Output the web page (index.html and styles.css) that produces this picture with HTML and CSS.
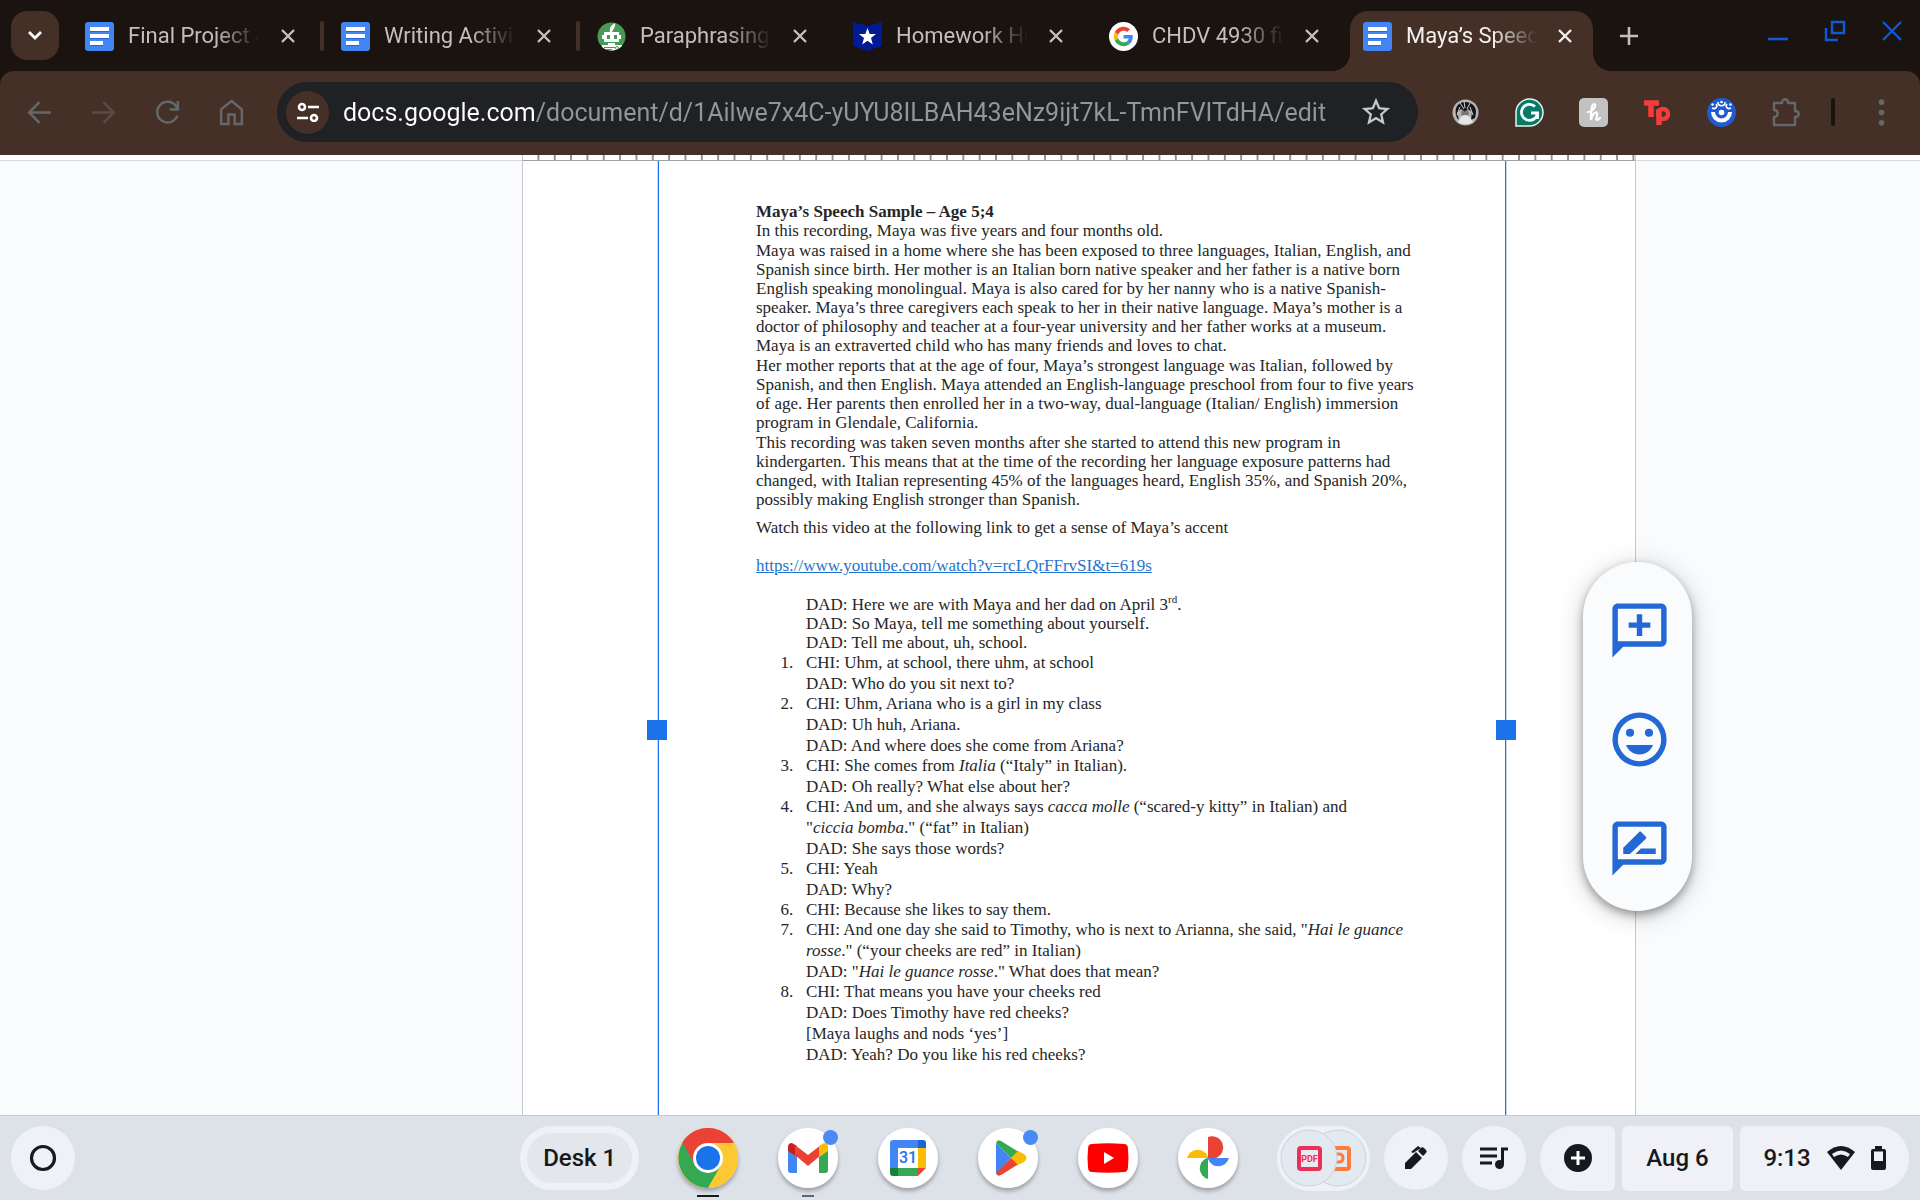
FILE: index.html
```html
<!DOCTYPE html>
<html lang="en">
<head>
<meta charset="utf-8">
<meta name="viewport" content="width=device-width, initial-scale=1">
<title>Maya’s Speech Sample</title>
<link rel="stylesheet" href="styles.css">
</head>
<body>
<svg class="defs" aria-hidden="true">
  <symbol id="docs" viewBox="0 0 29 29"><rect width="29" height="29" rx="3" fill="#4285f4"/><path fill="#2a65c8" d="M5 8h19v2H5zM5 15h19v2H5zM5 22h13v2H5z"/><path fill="#fff" d="M5 5h19v4H5zM5 12h19v4H5zM5 19h13v4H5z"/></symbol>
  <symbol id="close" viewBox="0 0 16 16"><path d="M2 2l12 12M14 2L2 14" stroke="currentColor" stroke-width="2.4" fill="none"/></symbol>
</svg>

<header class="browser">
  <nav class="tabstrip" aria-label="Tabs">
    <button class="tab-search" aria-label="Search tabs"><svg width="16" height="12" viewBox="0 0 16 12"><path d="M2 2l6 6 6-6" fill="none" stroke="#fff" stroke-width="2.8"/></svg></button>
    <div class="tab divided"><svg class="favicon"><use href="#docs"/></svg><span class="tab-title">Final Project 4930</span><button class="tab-close" aria-label="Close tab"><svg><use href="#close"/></svg></button></div>
    <div class="tab divided"><svg class="favicon"><use href="#docs"/></svg><span class="tab-title">Writing Activities</span><button class="tab-close" aria-label="Close tab"><svg><use href="#close"/></svg></button></div>
    <div class="tab"><svg class="favicon" viewBox="0 0 29 29"><defs><clipPath id="bot"><circle cx="14.500" cy="14.500" r="14"/></clipPath></defs><g clip-path="url(#bot)"><path fill="#479a56" d="M0 0h29v29H0z"/><path fill="#fff" d="M7 10h15v10H7zM13 10c-1-5 2-7 5-9 1 4-2 6-3 9zM11 21h7v2h-7zM5 23h20v6H5zM5 13h2v4H5zM22 13h2v4h-2z"/><path fill="#479a56" d="M10 13h3v4h-3zM17 13h3v4h-3zM7 25h11v1H7zM9 27h6v1H9z"/><circle cx="20" cy="26" r="1.500" fill="none" stroke="#479a56"/></g></svg><span class="tab-title">Paraphrasing Tool</span><button class="tab-close" aria-label="Close tab"><svg><use href="#close"/></svg></button></div>
    <div class="tab"><svg class="favicon" viewBox="0 0 29 29"><path fill="#001a96" d="M0 0l14.500 4L29 0v24l-14.500 5L0 24z"/><path fill="#fff" d="M14.500 6l2.200 6h6.300l-5 4 1.800 6.500-5.300-3.800-5.300 3.800L11 16l-5-4h6.300z"/></svg><span class="tab-title">Homework Help</span><button class="tab-close" aria-label="Close tab"><svg><use href="#close"/></svg></button></div>
    <div class="tab"><svg class="favicon" viewBox="-12 -12 72 72"><circle cx="24" cy="24" r="36" fill="#fff"/><path fill="#EA4335" d="M24 9.500c3.540 0 6.710 1.220 9.210 3.600l6.850-6.850C35.900 2.380 30.470 0 24 0 14.620 0 6.510 5.380 2.560 13.220l7.980 6.190C12.430 13.720 17.740 9.500 24 9.500z"/><path fill="#4285F4" d="M46.980 24.550c0-1.570-.15-3.090-.38-4.550H24v9.020h12.940c-.58 2.960-2.260 5.480-4.780 7.180l7.730 6c4.510-4.180 7.090-10.360 7.090-17.650z"/><path fill="#FBBC05" d="M10.530 28.590A14.500 14.500 0 0 1 9.770 24c0-1.600.27-3.140.76-4.590l-7.980-6.190A24 24 0 0 0 0 24c0 3.880.92 7.540 2.560 10.780z"/><path fill="#34A853" d="M24 48c6.480 0 11.930-2.130 15.890-5.810l-7.730-6c-2.150 1.450-4.920 2.300-8.160 2.300-6.260 0-11.570-4.220-13.470-9.910l-7.980 6.190C6.510 42.620 14.620 48 24 48z"/></svg><span class="tab-title">CHDV 4930 final</span><button class="tab-close" aria-label="Close tab"><svg><use href="#close"/></svg></button></div>
    <div class="tab active"><svg class="favicon"><use href="#docs"/></svg><span class="tab-title">Maya’s Speech Sample</span><button class="tab-close" aria-label="Close tab"><svg><use href="#close"/></svg></button></div>
    <button class="new-tab" aria-label="New tab"><svg width="20" height="20" viewBox="0 0 20 20"><path d="M10 1v18M1 10h18" stroke="currentColor" stroke-width="2.600"/></svg></button>
    <div class="window-controls">
      <button aria-label="Minimize"><svg viewBox="0 0 22 22"><path d="M1 19h20" stroke="currentColor" stroke-width="2.600"/></svg></button>
      <button aria-label="Restore"><svg viewBox="0 0 22 22"><path d="M8 2h12v11H8zM2 8v12h12" fill="none" stroke="currentColor" stroke-width="2.400"/></svg></button>
      <button aria-label="Close window"><svg viewBox="0 0 22 22"><path d="M2 2l18 18M20 2L2 20" stroke="currentColor" stroke-width="2.400"/></svg></button>
    </div>
  </nav>

  <div class="toolbar">
    <button class="tool" aria-label="Back"><svg viewBox="0 0 28 28"><path d="M25 14H4M14 4L4 14l10 10" class="line"/></svg></button>
    <button class="tool dim" aria-label="Forward"><svg viewBox="0 0 28 28"><path d="M3 14h21M14 4l10 10-10 10" class="line"/></svg></button>
    <button class="tool" aria-label="Reload"><svg viewBox="0 0 28 28"><path d="M23.500 17A10 10 0 1 1 22 7.500l1.500 2.500M24 3v8h-8" class="line"/></svg></button>
    <button class="tool" aria-label="Home"><svg viewBox="0 0 28 28"><path d="M4 25V11l10-8 10 8v14h-7v-9h-6v9z" class="line"/></svg></button>
    <div class="omnibox">
      <button class="site-info" aria-label="View site information"><svg width="24" height="20" viewBox="0 0 24 20"><g fill="none" stroke="#fff" stroke-width="2.600"><circle cx="6" cy="5" r="3"/><path d="M12 5h11M1 16h11"/><circle cx="18" cy="16" r="3"/></g></svg></button>
      <input class="address" type="text" aria-label="Address" value="docs.google.com/document/d/1Ailwe7x4C-yUYU8ILBAH43eNz9ijt7kL-TmnFVITdHA/edit">
      <button class="star" aria-label="Bookmark this tab"><svg width="34" height="34" viewBox="0 0 24 24"><path fill="#c7c8ca" d="M22 9.240l-7.190-.62L12 2 9.190 8.630 2 9.240l5.460 4.730L5.820 21 12 17.270 18.180 21l-1.630-7.030L22 9.240zM12 15.400l-3.760 2.270 1-4.280-3.320-2.880 4.380-.38L12 6.100l1.710 4.040 4.380.38-3.320 2.880 1 4.280L12 15.400z"/></svg></button>
    </div>
    <div class="extensions">
      <button class="tool" aria-label="Portrait extension"><svg viewBox="0 0 29 29"><circle cx="14.500" cy="14.500" r="13" fill="#b5b5b5"/><path d="M6 20C2 9 8 4 14 4s14 4 10 16l-4 2 1-8-4-3-3 3-4-3-4 4 2 7z" fill="#161616"/><path d="M11 11l3 3 3-3 1 6h-8z" fill="#777"/><path d="M10 19l4-2 5 2 3 5c-4 3-11 3-15 0z" fill="#e6e6e6"/><path d="M9 5l4 6M13 3l1 7M19 5l-3 6M6 17l3-8M22 17l-3-8" stroke="#d2d2d2"/></svg></button>
      <button class="tool" aria-label="Grammar extension"><svg viewBox="0 0 29 29"><path d="M1 28V14.500A13.500 13.500 0 1 1 14.500 28z" fill="#067a68" stroke="#e9f3f1" stroke-width="1.500"/><path d="M20 8.500A8 8 0 1 0 22.500 15H16M22.500 15v6" fill="none" stroke="#fff" stroke-width="2.800"/></svg></button>
      <button class="tool" aria-label="Coupon extension"><svg viewBox="0 0 29 29"><rect width="29" height="29" rx="5" fill="#c2c2c2"/><path d="M9 14c6-1 9-8 6-8s-3 10-3 16c1-6 5-9 6-7s-2 7 0 7c1 0 2-1 3-2" fill="none" stroke="#fff" stroke-width="2.200" stroke-linecap="round"/></svg></button>
      <button class="tool" aria-label="Teleparty"><svg viewBox="0 0 29 29"><path d="M1 5h15M8 4v15M16 11v16" fill="none" stroke="#f43d3a" stroke-width="5.500"/><circle cx="20" cy="16" r="5" fill="none" stroke="#f43d3a" stroke-width="4.500"/></svg></button>
      <button class="tool" aria-label="Blue extension"><svg viewBox="0 0 29 29"><circle cx="14.500" cy="14.500" r="14.500" fill="#1e5bd3"/><path d="M4 14h4a6.500 6.500 0 0 0 13 0h4a10.500 10.500 0 0 1-21 0z" fill="#fff"/><circle cx="14.500" cy="14.500" r="2.800" fill="#fff"/><g fill="none" stroke="#fff" stroke-width="1.600"><path d="M11 4c0 5 7 5 7 0M5 10c4 2 6-2 4-4M24 10c-4 2-6-2-4-4"/></g><g fill="#fff"><circle cx="14.500" cy="4" r="1.300"/><circle cx="5.500" cy="6.500" r="1.200"/><circle cx="23.500" cy="6.500" r="1.200"/></g></svg></button>
      <button class="tool" aria-label="Extensions"><svg viewBox="0 0 29 29"><path d="M3 5h8c0-5 6-5 6 0h7v8c5 0 5 6 0 6v8H3v-8c5 0 5-7 0-7z" class="line" stroke-linejoin="round"/></svg></button>
    </div>
    <span class="toolbar-divider"></span>
    <button class="tool" aria-label="Menu"><svg viewBox="0 0 28 28"><g fill="currentColor"><circle cx="14" cy="4" r="2.700"/><circle cx="14" cy="14" r="2.700"/><circle cx="14" cy="24" r="2.700"/></g></svg></button>
  </div>
</header>

<main class="workspace">
  <div class="gutter"></div>
  <section class="page">
    <div class="ruler"></div>
    <article class="selected-image">
      <div class="copy">
        <h1>Maya’s Speech Sample – Age 5;4</h1>
        <p>In this recording, Maya was five years and four months old.</p>
        <p>Maya was raised in a home where she has been exposed to three languages, Italian, English, and<br>Spanish since birth. Her mother is an Italian born native speaker and her father is a native born<br>English speaking monolingual. Maya is also cared for by her nanny who is a native Spanish-<br>speaker. Maya’s three caregivers each speak to her in their native language. Maya’s mother is a<br>doctor of philosophy and teacher at a four-year university and her father works at a museum.<br>Maya is an extraverted child who has many friends and loves to chat.</p>
        <p>Her mother reports that at the age of four, Maya’s strongest language was Italian, followed by<br>Spanish, and then English. Maya attended an English-language preschool from four to five years<br>of age. Her parents then enrolled her in a two-way, dual-language (Italian/ English) immersion<br>program in Glendale, California.</p>
        <p>This recording was taken seven months after she started to attend this new program in<br>kindergarten. This means that at the time of the recording her language exposure patterns had<br>changed, with Italian representing 45% of the languages heard, English 35%, and Spanish 20%,<br>possibly making English stronger than Spanish.</p>
        <p class="watch">Watch this video at the following link to get a sense of Maya’s accent</p>
        <p class="link"><a href="#video">https://www.youtube.com/watch?v=rcLQrFFrvSI&amp;t=619s</a></p>
        <div class="opening">
          <p>DAD: Here we are with Maya and her dad on April 3<sup>rd</sup>.</p>
          <p>DAD: So Maya, tell me something about yourself.</p>
          <p>DAD: Tell me about, uh, school.</p>
        </div>
        <ol>
          <li>CHI: Uhm, at school, there uhm, at school<br>DAD: Who do you sit next to?</li>
          <li>CHI: Uhm, Ariana who is a girl in my class<br>DAD: Uh huh, Ariana.<br>DAD: And where does she come from Ariana?</li>
          <li>CHI: She comes from <i>Italia</i> (“Italy” in Italian).<br>DAD: Oh really? What else about her?</li>
          <li>CHI: And um, and she always says <i>cacca molle</i> (“scared-y kitty” in Italian) and<br>"<i>ciccia bomba</i>." (“fat” in Italian)<br>DAD: She says those words?</li>
          <li>CHI: Yeah<br>DAD: Why?</li>
          <li>CHI: Because she likes to say them.</li>
          <li>CHI: And one day she said to Timothy, who is next to Arianna, she said, "<i>Hai le guance<br>rosse</i>." (“your cheeks are red” in Italian)<br>DAD: "<i>Hai le guance rosse</i>." What does that mean?</li>
          <li>CHI: That means you have your cheeks red<br>DAD: Does Timothy have red cheeks?<br>[Maya laughs and nods ‘yes’]<br>DAD: Yeah? Do you like his red cheeks?</li>
        </ol>
      </div>
      <span class="handle left"></span>
      <span class="handle right"></span>
    </article>
  </section>
  <div class="gutter"></div>
  <aside class="actions" aria-label="Comment tools">
    <button aria-label="Add comment"><svg viewBox="0 0 24 24"><path d="M20 2H4c-1.100 0-2 .9-2 2v18l4-4h14c1.100 0 2-.9 2-2V4c0-1.100-.9-2-2-2zm0 14H4V4h16v12zM11 14h2v-3h3V9h-3V6h-2v3H8v2h3z"/></svg></button>
    <button aria-label="Add emoji reaction"><svg viewBox="0 0 24 24"><path fill-rule="evenodd" d="M12 2a10 10 0 1 0 0 20 10 10 0 0 0 0-20zm0 18a8 8 0 1 1 0-16 8 8 0 0 1 0 16z"/><circle cx="8.500" cy="9.500" r="1.500"/><circle cx="15.500" cy="9.500" r="1.500"/><path d="M7 14h10c-.8 2-2.700 3.500-5 3.500S7.800 16 7 14z"/></svg></button>
    <button aria-label="Suggest edits"><svg viewBox="0 0 24 24"><path d="M20 2H4c-1.100 0-2 .9-2 2v18l4-4h14c1.100 0 2-.9 2-2V4c0-1.100-.9-2-2-2zm0 14H4V4h16v12zM10.500 14H18v-2h-5.500zM14.360 8.360c.2-.2.2-.51 0-.71l-1.770-1.770c-.2-.2-.51-.2-.71 0L6 11.760V14h2.470z"/></svg></button>
  </aside>
</main>

<footer class="shelf">
  <div class="shelf-left"><button class="round" aria-label="Launcher"><svg width="30" height="30" viewBox="0 0 30 30"><circle cx="15" cy="15" r="11.500" fill="none" stroke="#16191d" stroke-width="3.200"/></svg></button></div>
  <div class="shelf-apps">
    <button class="desk">Desk 1</button>
    <button class="app running" aria-label="Chrome"><svg viewBox="0 0 60 60"><circle cx="30" cy="30" r="30" fill="#fcc934"/><path d="M30 30L4 15A30 30 0 0 1 56 15z" fill="#ea4335"/><path d="M30 30L4.500 15A30 30 0 0 0 30 60l13-22.500z" fill="#34a853"/><path d="M17 22.500L5 15l12 22z" fill="#ea4335"/><path d="M43 37.500L30 60a30 30 0 0 0 26-45H30z" fill="#fcc934"/><circle cx="30" cy="30" r="15" fill="#fff"/><circle cx="30" cy="30" r="12" fill="#1a73e8"/></svg></button>
    <button class="app open" aria-label="Gmail"><svg viewBox="0 0 60 60"><circle cx="30" cy="30" r="30" fill="#fff"/><path d="M10 22l9 7v16h-6q-3 0-3-3z" fill="#4285f4"/><path d="M41 29l9-7v20q0 3-3 3h-6z" fill="#34a853"/><path d="M10 19q0-4 4-4l5 3v11l-9-6z" fill="#c5221f"/><path d="M17 17l13 10 13-10v10L30 38 17 27z" fill="#ea4335"/><path d="M41 18l5-3q4 0 4 4v4l-9 6z" fill="#fbbc04"/></svg><span class="badge"></span></button>
    <button class="app" aria-label="Calendar"><svg viewBox="0 0 60 60"><circle cx="30" cy="30" r="30" fill="#fff"/><path d="M15 12h27v8H20v20h-8V15q0-3 3-3z" fill="#4285f4"/><path d="M40 12h5q3 0 3 3v5h-8z" fill="#1967d2"/><path d="M40 20h8v20h-8z" fill="#fbbc04"/><path d="M20 40h20v8H20z" fill="#34a853"/><path d="M12 40h8v8h-5q-3 0-3-3z" fill="#188038"/><path d="M40 40h8l-8 8z" fill="#ea4335"/><text x="30" y="35" text-anchor="middle" class="calendar-day">31</text></svg></button>
    <button class="app" aria-label="Play Store"><svg viewBox="0 0 60 60"><circle cx="30" cy="30" r="30" fill="#fff"/><path d="M18 15v31l15-16z" fill="#4285f4"/><path d="M18 15q1-4 5-2l18 11-8 6z" fill="#34a853"/><path d="M18 45q1 4 5 2l18-11-8-6z" fill="#ea4335"/><path d="M40 23l6 3q5 4 0 8l-6 3-7-7z" fill="#fbbc04"/></svg><span class="badge"></span></button>
    <button class="app" aria-label="YouTube"><svg viewBox="0 0 60 60"><circle cx="30" cy="30" r="30" fill="#fff"/><path d="M14 16q16-1.500 32 0 4 0 4 5 1 9 0 18 0 5-4 5-16 1.500-32 0-4 0-4-5-1-9 0-18 0-5 4-5z" fill="#f00"/><path d="M26 24v12l10-6z" fill="#fff"/></svg></button>
    <button class="app" aria-label="Photos"><svg viewBox="0 0 60 60"><circle cx="30" cy="30" r="30" fill="#fff"/><path d="M30 9a11 11 0 0 1 8 21h-8z" fill="#ea4335"/><path d="M51 30a11 11 0 0 1-21 1v-1z" fill="#4285f4"/><path d="M30 51a11 11 0 0 1-1-21h1z" fill="#34a853"/><path d="M9 30a11 11 0 0 1 21-1v1z" fill="#fbbc04"/></svg></button>
  </div>
  <div class="shelf-status">
    <button class="files" aria-label="Recent files">
      <svg width="93" height="65" viewBox="0 0 93 65"><g stroke="#cbd2d9"><circle cx="61" cy="32" r="28" fill="#e2e9f1"/></g><rect x="49" y="22" width="23" height="21" rx="2" fill="none" stroke="#fa7d3c" stroke-width="4"/><path d="M56 28h6q4 0 4 4t-4 4h-6" fill="none" stroke="#fa7d3c" stroke-width="3"/><circle cx="32" cy="32" r="28" fill="#e2e9f1" stroke="#cbd2d9"/><rect x="22" y="22" width="21" height="21" rx="2" fill="#e8eaf2" stroke="#eb2f56" stroke-width="4"/><text x="32.500" y="36" text-anchor="middle" class="pdf-label">PDF</text></svg>
    </button>
    <button class="round" aria-label="Stylus tools"><svg width="28" height="28" viewBox="0 0 28 28"><path d="M3 25v-6l11-11 6 6L9 25zM16 7l3-3q1.500-1.500 3 0l2 2q1.500 1.500 0 3l-3 3zM11 9l-2-1 7-6 3 2z" fill="#16191d"/></svg></button>
    <button class="round media" aria-label="Media controls"><svg width="28" height="28" viewBox="0 0 28 28"><path d="M0 5h17M0 12h17M0 19h12" stroke="#16191d" stroke-width="2.800"/><path d="M21 3.500h7v3h-4V20h-3z" fill="#16191d"/><circle cx="19.500" cy="20.500" r="4.500" fill="#16191d"/></svg></button>
    <button class="pill first" aria-label="Quick add"><svg width="28" height="28" viewBox="0 0 28 28"><circle cx="14" cy="14" r="14" fill="#16191d"/><path d="M14 7v14M7 14h14" stroke="#fff" stroke-width="3"/></svg></button>
    <button class="pill date">Aug 6</button>
    <button class="pill last"><span>9:13</span><svg width="28" height="24" viewBox="0 0 28 24"><path d="M0 6q14-12 28 0L14 24z" fill="#16191d"/><path d="M5 8q9-7 18 0l-2 3q-7-5-14 0z" fill="#eff1f5"/></svg><svg class="battery" width="15" height="26" viewBox="0 0 15 26"><path fill-rule="evenodd" d="M4 1h7v3h2q2 0 2 2v17q0 2-2 2H2q-2 0-2-2V6q0-2 2-2h2zM3 6.500V16h9V6.500z" fill="#16191d"/></svg></button>
  </div>
</footer>
</body>
</html>
```
FILE: styles.css
```css
* { box-sizing: border-box; }
body {
  margin: 0;
  min-height: 100vh;
  display: flex;
  flex-direction: column;
  font-family: Roboto, "Liberation Sans", sans-serif;
  background: #f9fbfd;
}
button {
  display: inline-flex;
  align-items: center;
  justify-content: center;
  flex: none;
  margin: 0;
  padding: 0;
  border: 0;
  background: none;
  color: inherit;
  font: inherit;
}
svg { display: block; flex: none; }
.defs { position: absolute; width: 0; height: 0; }

/* Tab strip */
.browser { background: #1b130f; }
.tabstrip {
  display: flex;
  align-items: flex-start;
  height: 71px;
  padding: 11px 0 0 11px;
  color: #c2bfbe;
  font-size: 22px;
}
.tab-search {
  width: 48px;
  height: 49px;
  margin-right: 7px;
  border-radius: 16px;
  background: #443026;
}
.tab {
  position: relative;
  display: flex;
  align-items: center;
  flex: 0 1 256px;
  min-width: 0;
  height: 50px;
  padding: 0 18px 0 19px;
}
.divided::after {
  content: "";
  position: absolute;
  right: -2px;
  top: 10px;
  width: 4px;
  height: 30px;
  border-radius: 2px;
  background: #443026;
}
.favicon { width: 29px; height: 29px; margin-right: 14px; }
.tab-title {
  flex: 1 1 0;
  min-width: 0;
  overflow: hidden;
  white-space: nowrap;
  line-height: 30px;
  -webkit-mask-image: linear-gradient(90deg, #000 66%, transparent 100%);
  mask-image: linear-gradient(90deg, #000 66%, transparent 100%);
}
.tab-close { width: 32px; height: 32px; margin-left: 12px; }
.tab-close svg { width: 16px; height: 16px; }
.tab.active {
  flex-basis: 243px;
  height: 60px;
  margin: 0 9px 0 4px;
  padding: 0 12px 10px 13px;
  border-radius: 18px 18px 0 0;
  background: #443026;
  color: #f5f1ef;
}
.active::before,
.active::after {
  content: "";
  position: absolute;
  bottom: 0;
  width: 18px;
  height: 18px;
}
.active::before { left: -18px; background: radial-gradient(circle at 0 0, transparent 18px, #443026 18px); }
.active::after { right: -18px; background: radial-gradient(circle at 100% 0, transparent 18px, #443026 18px); }
.new-tab { width: 40px; height: 50px; margin-left: 7px; }
.window-controls { display: flex; margin-left: auto; color: #0d59d8; }
.window-controls button { width: 57px; height: 40px; }
.window-controls svg { width: 22px; height: 22px; }

/* Toolbar */
.toolbar {
  display: flex;
  align-items: center;
  height: 84px;
  padding: 0 7px 2px;
  border-radius: 14px 14px 0 0;
  background: #443026;
  color: #64676b;
}
.tool { width: 64px; height: 60px; }
.tool svg { width: 29px; height: 29px; }
.dim { color: #5a4c44; }
.line { fill: none; stroke: currentColor; stroke-width: 2.4; }
.omnibox {
  display: flex;
  align-items: center;
  flex: 1 1 0;
  min-width: 0;
  height: 60px;
  margin: 0 15px 0 14px;
  padding: 0 24px 0 9px;
  border-radius: 30px;
  background: #202124;
}
.site-info {
  width: 43px;
  height: 43px;
  margin-right: 14px;
  border-radius: 50%;
  background: #443026;
}
.address {
  flex: 1 1 0;
  min-width: 0;
  height: 40px;
  padding: 0;
  border: 0;
  outline: 0;
  font: 25px Roboto, "Liberation Sans", sans-serif;
  background: linear-gradient(90deg, #fff 192px, #949699 192px);
  -webkit-background-clip: text;
  background-clip: text;
  -webkit-text-fill-color: transparent;
}
.star { width: 36px; height: 40px; }
.extensions { display: flex; }
.toolbar-divider {
  width: 4px;
  height: 28px;
  margin: 0 14px;
  border-radius: 2px;
  background: #1b130f;
}

/* Document */
.workspace {
  position: relative;
  flex: 1 0 auto;
  display: grid;
  grid-template-columns: 522fr 1114fr 284fr;
}
.gutter { border-top: 5px solid #fff; box-shadow: inset 0 1px #d6d8da; }
.page {
  display: flex;
  flex-direction: column;
  border: solid #c7c9cc;
  border-width: 0 1px;
  background: #fff;
}
.ruler {
  height: 6px;
  border-bottom: 1px solid #9c9fa3;
  background: linear-gradient(90deg, transparent calc(100% - 2px), #8f9295 0) 0 0 / calc(100% / 68) 100%;
}
.selected-image {
  position: relative;
  flex: 1;
  margin: 0 129px 0 135px;
  padding: 41px 40px 40px 97px;
  border: solid #1a73e8;
  border-width: 0 1px;
  box-shadow: 1px 0 #c5dbf8, -1px 0 #c5dbf8;
}
.handle {
  position: absolute;
  top: 559px;
  width: 20px;
  height: 20px;
  background: #1a73e8;
}
.handle.left { left: -12px; }
.handle.right { right: -11px; }
.copy {
  color: #262626;
  font: 17px/19px "Liberation Serif", "Times New Roman", serif;
  white-space: nowrap;
}
.copy h1 { margin: 0; font-size: 17px; line-height: 19px; }
.copy p { margin: 0 0 1px; }
.copy .watch { margin: 9px 0 19px; }
.copy .link { margin: 0 0 20px; }
.copy a { color: #1f74cf; }
.opening { padding-left: 50px; }
.opening p { margin: 0; }
.copy sup { font-size: 11px; line-height: 0; }
.copy ol { margin: 0; padding-left: 50px; line-height: 21px; }
.copy li + li { margin-top: -1px; }
.copy li::marker { content: counter(list-item) ".\2002\2005"; }

.actions {
  position: absolute;
  top: 407px;
  right: 228px;
  display: flex;
  flex-direction: column;
  width: 109px;
  padding: 14px 0 8px 4px;
  border-radius: 55px;
  background: #f9fbfd;
  box-shadow: 0 4px 10px rgba(0, 0, 0, .35), 0 4px 28px rgba(0, 0, 0, .18);
}
.actions button { height: 109px; }
.actions svg { width: 65px; height: 65px; fill: #2368d5; }

/* Shelf */
.shelf {
  display: grid;
  grid-template-columns: 521fr 716fr 683fr;
  align-items: center;
  height: 85px;
  border-top: 1px solid #c6c9cd;
  background: #dde1e8;
  color: #16191d;
  font-size: 24px;
  font-weight: 500;
}
.shelf-left { padding-left: 11px; }
.round { width: 64px; height: 64px; border-radius: 50%; background: #eff1f6; }
.shelf-apps { display: flex; align-items: center; gap: 40px; white-space: nowrap; }
.desk {
  width: 119px;
  height: 64px;
  border: 7px solid #eff1f6;
  border-radius: 32px;
  background: #e3e6ea;
}
.app { position: relative; width: 60px; height: 60px; border-radius: 50%; box-shadow: 0 3px 4px rgba(0, 0, 0, .3); }
.app svg { width: 60px; height: 60px; }
.desk + .app { margin-left: -1px; }
.badge {
  position: absolute;
  top: 2px;
  right: 0;
  width: 15px;
  height: 15px;
  border-radius: 50%;
  background: #4a8af4;
}
.running::after,
.open::after {
  content: "";
  position: absolute;
  bottom: -9px;
  width: 22px;
  height: 2px;
  background: #16191d;
}
.open::after { width: 12px; background: #566879; }
.calendar-day { font: 500 16px Roboto, sans-serif; fill: #1a73e8; }
.pdf-label { font: 700 9px Roboto, sans-serif; fill: #eb2f56; }
.shelf-status {
  display: flex;
  align-items: center;
  justify-content: flex-end;
  gap: 14px;
  padding-right: 11px;
}
.files { width: 93px; height: 65px; border-radius: 33px; background: #eff1f6; }
.pill { height: 65px; border-radius: 6px; background: #eff1f6; }
.first { width: 75px; border-radius: 33px 6px 6px 33px; }
.date { width: 111px; margin-left: -7px; }
.last { width: 169px; margin-left: -7px; gap: 16px; border-radius: 6px 33px 33px 6px; }
```
